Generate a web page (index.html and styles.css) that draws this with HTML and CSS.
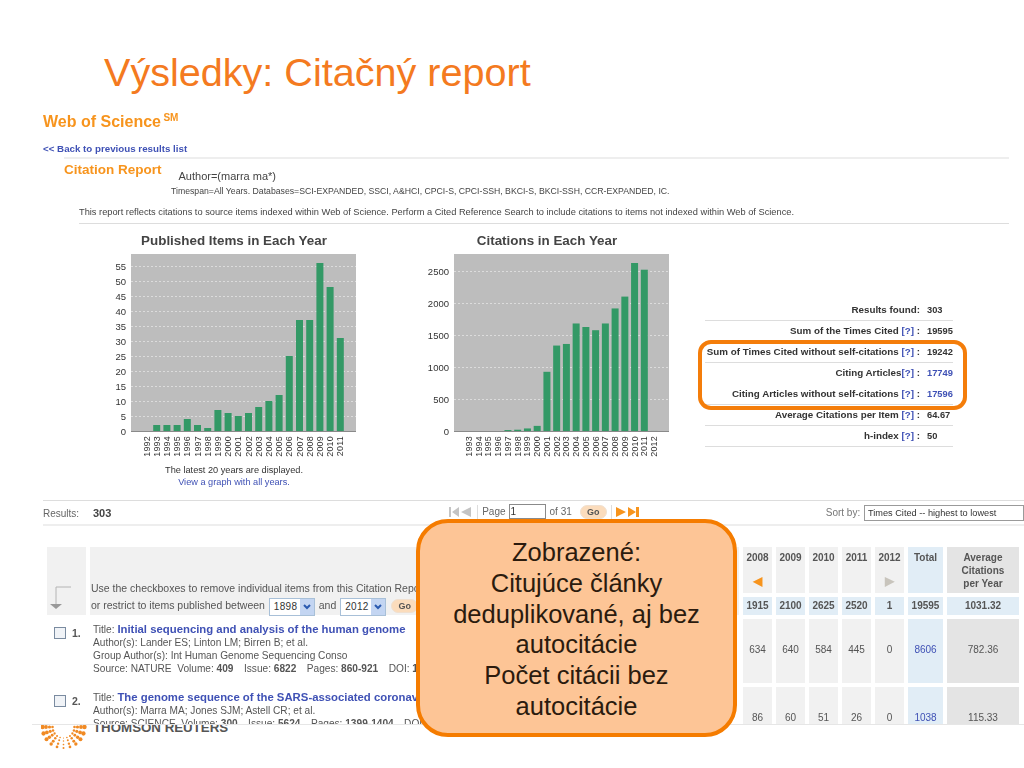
FILE: index.html
```html
<!DOCTYPE html>
<html lang="sk">
<head>
  <meta charset="UTF-8" />
  <title>Výsledky: Citačný report</title>
  <link rel="stylesheet" href="styles.css">
</head>
<body>
  <div class="slide">
    <main class="report">
      <h1>Výsledky: Citačný report</h1>

      <div class="shot">
        <div class="brand">Web of Science <sup>SM</sup></div>
        <a class="back-link" href="#">&lt;&lt; Back to previous results list</a>

        <div class="report-head">
          <h2>Citation Report</h2>
          <span class="query">Author=(marra ma*)</span>
        </div>
        <p class="timespan">Timespan=All Years. Databases=SCI-EXPANDED, SSCI, A&amp;HCI, CPCI-S, CPCI-SSH, BKCI-S, BKCI-SSH, CCR-EXPANDED, IC.</p>
        <p class="note">This report reflects citations to source items indexed within Web of Science. Perform a Cited Reference Search to include citations to items not indexed within Web of Science.</p>

        <div class="chart-row">
          <div class="chart chart-items">
            <h3>Published Items in Each Year</h3>
            <svg id="itemsChart" width="248" height="212"></svg>
            <p class="chart-note">The latest 20 years are displayed.<br><a href="#">View a graph with all years.</a></p>
          </div>
          <div class="chart chart-citations">
            <h3>Citations in Each Year</h3>
            <svg id="citationsChart" width="244" height="212"></svg>
          </div>
          <div class="stats">
            <div class="stat"><span>Results found:</span><b>303</b></div>
            <div class="stat"><span>Sum of the Times Cited <a href="#">[?]</a> :</span><b>19595</b></div>
            <div class="stat"><span>Sum of Times Cited without self-citations <a href="#">[?]</a> :</span><b>19242</b></div>
            <div class="stat"><span>Citing Articles<a href="#">[?]</a> :</span><b><a href="#">17749</a></b></div>
            <div class="stat"><span>Citing Articles without self-citations <a href="#">[?]</a> :</span><b><a href="#">17596</a></b></div>
            <div class="stat"><span>Average Citations per Item <a href="#">[?]</a> :</span><b>64.67</b></div>
            <div class="stat"><span>h-index <a href="#">[?]</a> :</span><b>50</b></div>
          </div>
        </div>

        <div class="results-bar">
          <div class="results-count">Results: <b>303</b></div>
          <div class="pager">
            <svg width="24" height="10" viewBox="0 0 24 10"><path d="M0 0H2V10H0ZM10 0V10L3 5ZM22 0V10L12 5Z" fill="#c4c4c4"/></svg>
            <span class="sep"></span>
            <span>Page</span><span class="page-input">1</span><span>of 31</span>
            <span class="go">Go</span>
            <span class="sep"></span>
            <svg width="24" height="10" viewBox="0 0 24 10"><path d="M0 0V10L10 5ZM12 0V10L20 5ZM20 0H23V10H20Z" fill="#f7941d"/></svg>
          </div>
          <div class="sort">Sort by: <span class="sort-select">Times Cited -- highest to lowest</span></div>
        </div>

        <div class="cite-table">
          <div class="cell arrow-cell">
            <svg width="22" height="24" viewBox="0 0 22 24"><path d="M24 1H7V18" fill="none" stroke="#b4b4b4"/><path d="M1 18H13L7 23Z" fill="#999"/></svg>
          </div>
          <div class="cell intro-cell">
            Use the checkboxes to remove individual items from this Citation Report<br>
            or restrict to items published between
            <span class="year-select">1898<svg width="14" height="16" viewBox="0 0 14 16"><path d="M4 6L7 9L10 6" fill="none" stroke="#2a5ab0" stroke-width="2"/></svg></span> and
            <span class="year-select">2012<svg width="14" height="16" viewBox="0 0 14 16"><path d="M4 6L7 9L10 6" fill="none" stroke="#2a5ab0" stroke-width="2"/></svg></span>
            <span class="go">Go</span>
          </div>
          <div class="cell head">2008<i class="nav nav-on">◀</i></div>
          <div class="cell head">2009</div>
          <div class="cell head">2010</div>
          <div class="cell head">2011</div>
          <div class="cell head">2012<i class="nav">▶</i></div>
          <div class="cell head blue">Total</div>
          <div class="cell head avg">Average<br>Citations<br>per Year</div>

          <div class="cell sum">1915</div>
          <div class="cell sum">2100</div>
          <div class="cell sum">2625</div>
          <div class="cell sum">2520</div>
          <div class="cell sum">1</div>
          <div class="cell sum">19595</div>
          <div class="cell sum">1031.32</div>

          <div class="num"><span class="check"></span>1.</div>
          <div class="item">
            Title: <a href="#">Initial sequencing and analysis of the human genome</a><br>
            Author(s): Lander ES; Linton LM; Birren B; et al.<br>
            Group Author(s): Int Human Genome Sequencing Conso<br>
            Source: NATURE&nbsp; Volume: <b>409</b> &nbsp; Issue: <b>6822</b> &nbsp; Pages: <b>860-921</b> &nbsp; DOI: <b>10.1038/35057062</b>
          </div>
          <div class="cell val">634</div>
          <div class="cell val">640</div>
          <div class="cell val">584</div>
          <div class="cell val">445</div>
          <div class="cell val">0</div>
          <div class="cell val blue"><a href="#">8606</a></div>
          <div class="cell val avg">782.36</div>

          <div class="num"><span class="check"></span>2.</div>
          <div class="item">
            Title: <a href="#">The genome sequence of the SARS-associated coronavirus</a><br>
            Author(s): Marra MA; Jones SJM; Astell CR; et al.<br>
            Source: SCIENCE&nbsp; Volume: <b>300</b> &nbsp; Issue: <b>5624</b> &nbsp; Pages: <b>1399-1404</b> &nbsp; DOI: <b>10.1126/science.1085953</b>
          </div>
          <div class="cell val">86</div>
          <div class="cell val">60</div>
          <div class="cell val">51</div>
          <div class="cell val">26</div>
          <div class="cell val">0</div>
          <div class="cell val blue"><a href="#">1038</a></div>
          <div class="cell val avg">115.33</div>
        </div>
      </div>
    </main>

    <footer class="footer">
      <svg id="logoDots" width="46" height="26"></svg>
      <span class="logo-text">THOMSON REUTERS</span>
    </footer>

    <div class="highlight"></div>
    <div class="callout">Zobrazené:<br>Citujúce články<br>deduplikované, aj bez<br>autocitácie<br>Počet citácii bez<br>autocitácie</div>
  </div>

  <script src="charts.js"></script>
</body>
</html>
```

FILE: styles.css
```css
* {
  box-sizing: border-box;
}

body {
  margin: 0;
  background: #fff;
  font-family: "Liberation Sans", Arial, sans-serif;
  color: #444;
}

a {
  color: #3f51b5;
  text-decoration: none;
}

.slide {
  position: relative;
  width: 1024px;
  height: 768px;
  overflow: hidden;
}

.report {
  height: 724px;
  overflow: hidden;
  padding-left: 43px;
  background: #fff;
}

.shot {
  filter: blur(0.3px);
}

h1 {
  margin: 0 0 0 61px;
  padding-top: 50px;
  font-size: 39.6px;
  line-height: 44px;
  font-weight: normal;
  color: #f47a20;
}

.brand {
  margin-top: 19px;
  font-size: 16px;
  line-height: 18px;
  font-weight: bold;
  color: #f7941d;
}

.brand sup {
  font-size: 10px;
  line-height: 0;
  margin-left: -2px;
}

.back-link {
  display: block;
  margin-top: 12px;
  font-size: 9.75px;
  line-height: 12px;
  font-weight: bold;
}

.report-head {
  display: flex;
  align-items: flex-start;
  margin: 2px 15px 0 21px;
  padding-top: 3px;
  border-top: 2px solid #eee;
}

.report-head h2 {
  margin: 0;
  font-size: 13.5px;
  line-height: 16px;
  color: #f7941d;
}

.query {
  margin: 7px 0 0 17px;
  font-size: 11px;
  line-height: 14px;
}

.timespan {
  margin: 2px 0 0 128px;
  font-size: 8.7px;
  line-height: 12px;
}

.note {
  margin: 9px 15px 0 36px;
  padding-bottom: 5px;
  font-size: 9.28px;
  line-height: 12px;
  border-bottom: 1px solid #ddd;
  white-space: nowrap;
}

.chart-row {
  display: flex;
  margin: 8px 0 0 67px;
}

.chart h3 {
  margin: 0;
  font-size: 13.4px;
  line-height: 18px;
  text-align: center;
  color: #444;
  white-space: nowrap;
}

.chart svg {
  display: block;
}

.chart-items {
  width: 248px;
}

.chart-citations {
  width: 244px;
  margin-left: 67px;
}

.chart-note {
  margin: 2px 0 0;
  font-size: 9.2px;
  line-height: 12px;
  text-align: center;
  color: #333;
}

.stats {
  width: 248px;
  margin: 68px 0 0 36px;
}

.stat {
  display: flex;
  justify-content: flex-end;
  height: 21px;
  font-size: 9.8px;
  line-height: 20px;
  font-weight: bold;
  white-space: nowrap;
  border-bottom: 1px solid #ddd;
  color: #333;
}

.stat:nth-child(4) {
  border-bottom-color: transparent;
}

.stat b {
  width: 26px;
  margin-left: 7px;
  font-size: 9.3px;
}

.results-bar {
  display: flex;
  align-items: center;
  height: 26px;
  margin-top: 12px;
  border-top: 1px solid #ddd;
  border-bottom: 2px solid #eee;
  font-size: 10px;
}

.results-count {
  width: 411px;
  color: #666;
}

.results-count b {
  margin-left: 11px;
  font-size: 11px;
  color: #444;
}

.pager {
  display: flex;
  align-items: center;
  gap: 3px;
  width: 381px;
  margin-top: -2px;
  color: #666;
}

.sep {
  width: 1px;
  height: 14px;
  margin: 0 1px;
  background: #ddd;
}

.page-input {
  width: 37px;
  height: 15px;
  margin-right: 1px;
  padding-left: 1px;
  border: 1px solid #8a8a8a;
  font-size: 10px;
  line-height: 13px;
  color: #333;
}

.go {
  display: inline-block;
  width: 27px;
  height: 14px;
  margin-left: 5px;
  border-radius: 8px;
  background: #fbdcbc;
  border: 1px solid #f0e0d0;
  font-size: 9px;
  line-height: 12px;
  font-weight: bold;
  text-align: center;
  color: #555;
}

.sort {
  color: #777;
  white-space: nowrap;
}

.sort-select {
  display: inline-block;
  width: 160px;
  height: 16px;
  margin-left: 1px;
  padding-left: 3px;
  border: 1px solid #9a9a9a;
  font-size: 9.2px;
  line-height: 14px;
  color: #333;
}

.cite-table {
  display: grid;
  grid-template-columns: 39px 649px repeat(5, 29px) 35px 72px;
  grid-template-rows: 46px 18px 64px 64px;
  gap: 4px;
  margin: 21px 0 0 4px;
  font-size: 10px;
  color: #555;
}

.cell {
  background: #f1f1f1;
  text-align: center;
}

.arrow-cell {
  grid-row: span 2;
  display: flex;
  align-items: flex-end;
  padding: 0 0 5px 2px;
}

.intro-cell {
  grid-row: span 2;
  padding: 33px 0 0 1px;
  font-size: 10.5px;
  line-height: 17px;
  text-align: left;
  background: #f1f1f1;
  white-space: nowrap;
}

.intro-cell .go {
  margin-left: 1px;
}

.year-select {
  display: inline-block;
  position: relative;
  width: 46px;
  height: 18px;
  margin: 0 1px;
  padding-left: 4px;
  border: 1px solid #a8c0d8;
  background: #fff;
  font-size: 10px;
  letter-spacing: 0.3px;
  line-height: 16px;
  color: #333;
  vertical-align: -1px;
}

.year-select svg {
  position: absolute;
  top: 0;
  right: 0;
  background: #c3d5f2;
}

.head {
  padding-top: 4px;
  font-weight: bold;
  line-height: 13px;
}

.nav {
  display: block;
  margin-top: 11px;
  font-size: 12px;
  font-style: normal;
  color: #c8c4bc;
}

.nav-on {
  color: #f7941d;
}

.avg {
  background: #e4e4e4;
}

.blue {
  background: #e1edf6;
}

.sum {
  background: #e1edf6;
  font-weight: bold;
  line-height: 18px;
}

.val {
  line-height: 62px;
}

.num {
  display: flex;
  padding: 7px 0 0 7px;
  gap: 6px;
  font-size: 10.5px;
  font-weight: bold;
  line-height: 15px;
}

.check {
  width: 12px;
  height: 12px;
  margin-top: 1px;
  border: 1px solid #7a8ba0;
  background: #f0f3f7;
}

.item {
  padding: 4px 0 0 3px;
  font-size: 10.15px;
  line-height: 13px;
  white-space: nowrap;
  overflow: hidden;
}

.item a {
  font-size: 11.35px;
  font-weight: bold;
}

.item b {
  margin-right: 2px;
}

.footer {
  display: flex;
  height: 44px;
  margin-left: 32px;
  padding-left: 9px;
  overflow: hidden;
  border-top: 1px solid #e6e6e6;
}

.logo-text {
  margin: -4px 0 0 6px;
  font-size: 13.3px;
  line-height: 14px;
  font-weight: bold;
  color: #555;
}

.highlight {
  position: absolute;
  left: 698px;
  top: 340px;
  width: 269px;
  height: 70px;
  border: 4px solid #f47d0a;
  border-radius: 13px;
}

.callout {
  position: absolute;
  left: 416px;
  top: 519px;
  width: 321px;
  height: 218px;
  padding-top: 14px;
  border: 4px solid #f57c00;
  border-radius: 32px;
  background: #fdc596;
  font-size: 25.5px;
  line-height: 30.8px;
  text-align: center;
  color: #2b1b0e;
}
```

FILE: charts.js
```js
const SVG_NS = "http://www.w3.org/2000/svg";

function add(svg, tag, attrs, text) {
  const el = document.createElementNS(SVG_NS, tag);
  for (const key in attrs) {
    el.setAttribute(key, attrs[key]);
  }
  if (text !== undefined) el.textContent = text;
  svg.appendChild(el);
}

// plot coordinates are relative to the svg
function drawChart(id, opts) {
  const svg = document.getElementById(id);
  const bottom = 181;
  add(svg, "rect", { x: opts.left, y: 4, width: opts.width, height: 177, fill: "#bdbdbd" });

  opts.ticks.forEach(tick => {
    const y = bottom - tick * opts.scale;
    if (tick > 0) {
      const lineY = Math.round(y) + 0.5;
      add(svg, "line", { x1: opts.left, x2: opts.left + opts.width, y1: lineY, y2: lineY, stroke: "#dcdcdc", "stroke-dasharray": "2 2" });
    }
    add(svg, "text", { x: opts.left - 5, y: y + 3.5, "text-anchor": "end", "font-size": 9.5, fill: "#333" }, tick);
  });
  add(svg, "line", { x1: opts.left, x2: opts.left + opts.width, y1: bottom + 0.5, y2: bottom + 0.5, stroke: "#8a8a8a" });

  opts.values.forEach((value, i) => {
    const x = opts.first + i * opts.step;
    const h = value * opts.scale;
    if (h > 0) {
      add(svg, "rect", { x: x, y: bottom - h, width: 7, height: h, fill: "#339966" });
    }
    const labelX = x + 6.5;
    add(svg, "text", {
      transform: "translate(" + labelX + " 186) rotate(-90)",
      "text-anchor": "end",
      "font-size": 9,
      fill: "#333",
      "letter-spacing": 0.2
    }, opts.startYear + i);
  });
}

drawChart("itemsChart", {
  left: 21, width: 225, first: 33, step: 10.2, scale: 3, startYear: 1992,
  ticks: [0, 5, 10, 15, 20, 25, 30, 35, 40, 45, 50, 55],
  values: [0, 2, 2, 2, 4, 2, 1, 7, 6, 5, 6, 8, 10, 12, 25, 37, 37, 56, 48, 31]
});

drawChart("citationsChart", {
  left: 29, width: 215, first: 40.5, step: 9.74, scale: 0.064, startYear: 1993,
  ticks: [0, 500, 1000, 1500, 2000, 2500],
  values: [0, 0, 0, 0, 15, 20, 40, 80, 925, 1335, 1360, 1680, 1625, 1575, 1680, 1915, 2100, 2625, 2520, 1]
});

// dotted half circle of the logo: spokes of dots, bigger towards the top corners
const logo = document.getElementById("logoDots");
const spokes = 11;
[21, 17.5, 14, 11].forEach((radius, ring) => {
  for (let i = 0; i < spokes; i++) {
    const angle = Math.PI * i / (spokes - 1);
    const edge = Math.abs(Math.cos(angle));
    add(logo, "circle", {
      cx: 22.5 + Math.cos(angle) * radius,
      cy: 2 + Math.sin(angle) * radius,
      r: (2.2 - ring * 0.3) * (0.45 + 0.55 * edge),
      fill: "#f08a24"
    });
  }
});
```
